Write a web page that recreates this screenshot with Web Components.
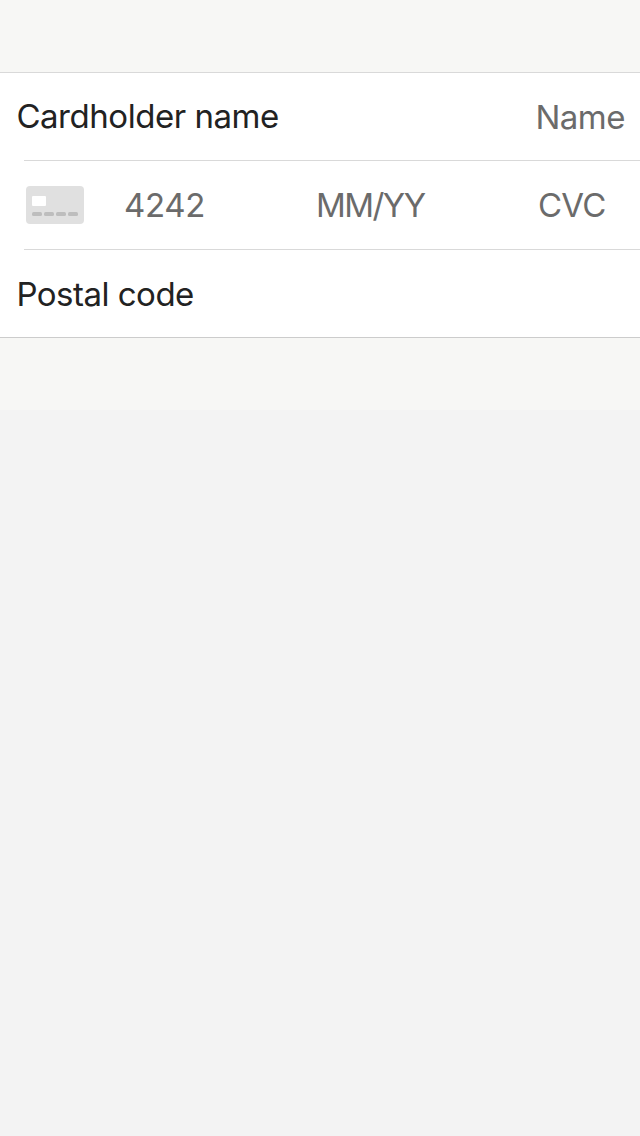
<!DOCTYPE html>
<html lang="en"><head><meta charset="utf-8"><title>Payment card</title>
<style>body{margin:0;background:#f3f3f3;font-family:Inter,"Liberation Sans",sans-serif}</style></head><body>
<payment-form>
<form-row style="--h:87px"><field-text style="--gap:16.4px;--ls:-.46px;--lh:87px">Cardholder name</field-text><field-text muted end style="--ls:-.5px;--lh:88px">Name</field-text></form-row>
<form-row divided style="--h:88px"><card-icon></card-icon><field-text muted style="--gap:40px;--width:192px;--ls:-.35px">4242</field-text><field-text muted style="--width:222px;--ls:-1.55px">MM/YY</field-text><field-text muted style="--ls:-.8px">CVC</field-text></form-row>
<form-row divided style="--h:87px"><field-text style="--gap:16.4px;--ls:-.5px">Postal code</field-text></form-row>
</payment-form>
<script>
class PaymentForm extends HTMLElement{constructor(){super();this.attachShadow({mode:'open'}).innerHTML='<style>:host{display:block;background:#f7f7f5;padding:72px 0}section{background:#fff;border-top:1px solid #d9d9d9;border-bottom:1px solid #ccc}</style><section><slot></slot></section>'}}
class FormRow extends HTMLElement{constructor(){super();this.attachShadow({mode:'open'}).innerHTML='<style>:host{display:block}:host([divided])::before{content:"";display:block;height:1px;margin-left:24px;background:#d9d9d9}.row{display:flex;align-items:flex-start;height:var(--h)}</style><div class="row"><slot></slot></div>'}}
class FieldText extends HTMLElement{constructor(){super();this.attachShadow({mode:'open'}).innerHTML='<style>:host{display:block;box-sizing:border-box;flex:none;width:var(--width,auto);margin-left:var(--gap,0);font-size:33px;font-weight:380;line-height:var(--lh,88px);letter-spacing:var(--ls);white-space:nowrap;color:#222}:host([muted]){color:#6b6b6b}:host([end]){margin-left:auto;margin-right:15px}</style><slot></slot>'}}
class CardIcon extends HTMLElement{constructor(){super();this.attachShadow({mode:'open'}).innerHTML='<style>:host{display:block;flex:none;width:58px;height:38px;margin:25px 0 0 26px}svg{display:block}</style><svg width="58" height="38" viewBox="0 0 58 38"><rect width="58" height="38" rx="4" fill="#e0e0e0"/><rect x="6" y="10" width="14" height="10" rx="1" fill="#fff"/><g fill="#bdbdbd"><rect x="6" y="26" width="10" height="4" rx="1.5"/><rect x="18" y="26" width="10" height="4" rx="1.5"/><rect x="30" y="26" width="10" height="4" rx="1.5"/><rect x="42" y="26" width="10" height="4" rx="1.5"/></g></svg>'}}
customElements.define('payment-form',PaymentForm);customElements.define('form-row',FormRow);customElements.define('field-text',FieldText);customElements.define('card-icon',CardIcon);
</script></body></html>
